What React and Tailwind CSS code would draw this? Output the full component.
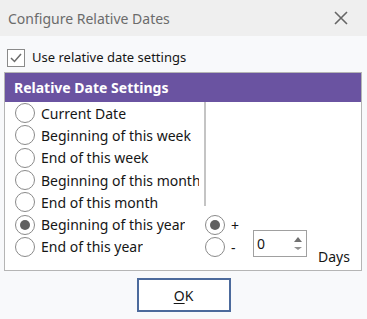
import { useState } from "react";

const options = [
  "Current Date",
  "Beginning of this week",
  "End of this week",
  "Beginning of this month",
  "End of this month",
  "Beginning of this year",
  "End of this year",
];

function Radio({ checked }) {
  return (
    <span className="flex h-[20px] w-[20px] shrink-0 items-center justify-center rounded-full border-[1.5px] border-[#8a8a8a] bg-white">
      {checked && <span className="h-[10px] w-[10px] rounded-full bg-[#606060]" />}
    </span>
  );
}

export default function App() {
  const [selected, setSelected] = useState(5);
  const [sign, setSign] = useState("+");

  return (
    <div
      className="flex h-[319px] w-[367px] flex-col bg-[#f8f9fb] text-[#161616]"
      style={{ fontFamily: '"Segoe UI", "Noto Sans", sans-serif' }}
    >
      {/* title bar */}
      <div className="flex h-[36px] items-center justify-between bg-[#efefef] pl-[8px] pr-[19px]">
        <span className="text-[14px] text-[#6b6b6b]">Configure Relative Dates</span>
        <svg width="14" height="14" viewBox="0 0 14 14" className="text-[#666]">
          <path d="M1 1L13 13M13 1L1 13" stroke="currentColor" strokeWidth="1.6" />
        </svg>
      </div>

      <div className="flex flex-col px-[4px]">
        <label className="mt-[13px] flex h-[18px] items-center gap-[7px] pl-[3px]">
          <span className="flex h-[18px] w-[18px] items-center justify-center border border-[#8a8a8a] bg-white">
            <svg width="12" height="10" viewBox="0 0 12 10">
              <path d="M1 5L4.5 8.5L11 1" fill="none" stroke="#6b6b6b" strokeWidth="1.5" />
            </svg>
          </span>
          <span className="text-[13px]">Use relative date settings</span>
        </label>

        {/* group box */}
        <div className="mt-[5px] flex h-[199px] w-[358px] flex-col border border-[#b5b5b5] bg-white">
          <div className="flex h-[29px] items-center bg-[#6a53a1] pl-[9px] text-[14px] font-bold text-white">
            Relative Date Settings
          </div>
          <div className="flex">
            <div className="flex w-[199px] flex-col pl-[10px] pr-[5px]">
              {options.map((o, i) => (
                <div
                  key={o}
                  className="flex h-[22.3px] items-center gap-[6px] whitespace-nowrap text-[14px]"
                  onClick={() => setSelected(i)}
                >
                  <Radio checked={selected === i} />
                  <span className="min-w-0 overflow-hidden">{o}</span>
                </div>
              ))}
            </div>
            <div className="flex flex-col">
              <div className="h-[104px] w-[2px] bg-[#c4c4c4]" />
              <div className="mt-[8px] flex">
                <div className="flex w-[49px] flex-col pl-[1px]">
                  {["+", "-"].map((s) => (
                    <div
                      key={s}
                      className="flex h-[22.3px] items-center gap-[6px] text-[14px]"
                      onClick={() => setSign(s)}
                    >
                      <Radio checked={sign === s} />
                      <span>{s}</span>
                    </div>
                  ))}
                </div>
                <div className="mt-[16px] flex h-[27px] w-[54px] items-center justify-between border border-[#a0a0a0] bg-white pl-[3px] pr-[4px] text-[14px]">
                  <span>0</span>
                  <div className="flex flex-col gap-[5px]">
                    <svg width="8" height="5" viewBox="0 0 8 5">
                      <path d="M0 5L4 0L8 5Z" fill="#707070" />
                    </svg>
                    <svg width="8" height="3" viewBox="0 0 8 3">
                      <path d="M0 0L8 0L4 3Z" fill="#909090" />
                    </svg>
                  </div>
                </div>
                <span className="ml-[11px] mt-[32px] text-[14px]">Days</span>
              </div>
            </div>
          </div>
        </div>

        <div className="mt-[7px] flex justify-center">
          <button className="h-[34px] w-[94px] border-2 border-[#4c6a9c] bg-white text-[14px]">
            <span className="underline underline-offset-2">O</span>K
          </button>
        </div>
      </div>
    </div>
  );
}
